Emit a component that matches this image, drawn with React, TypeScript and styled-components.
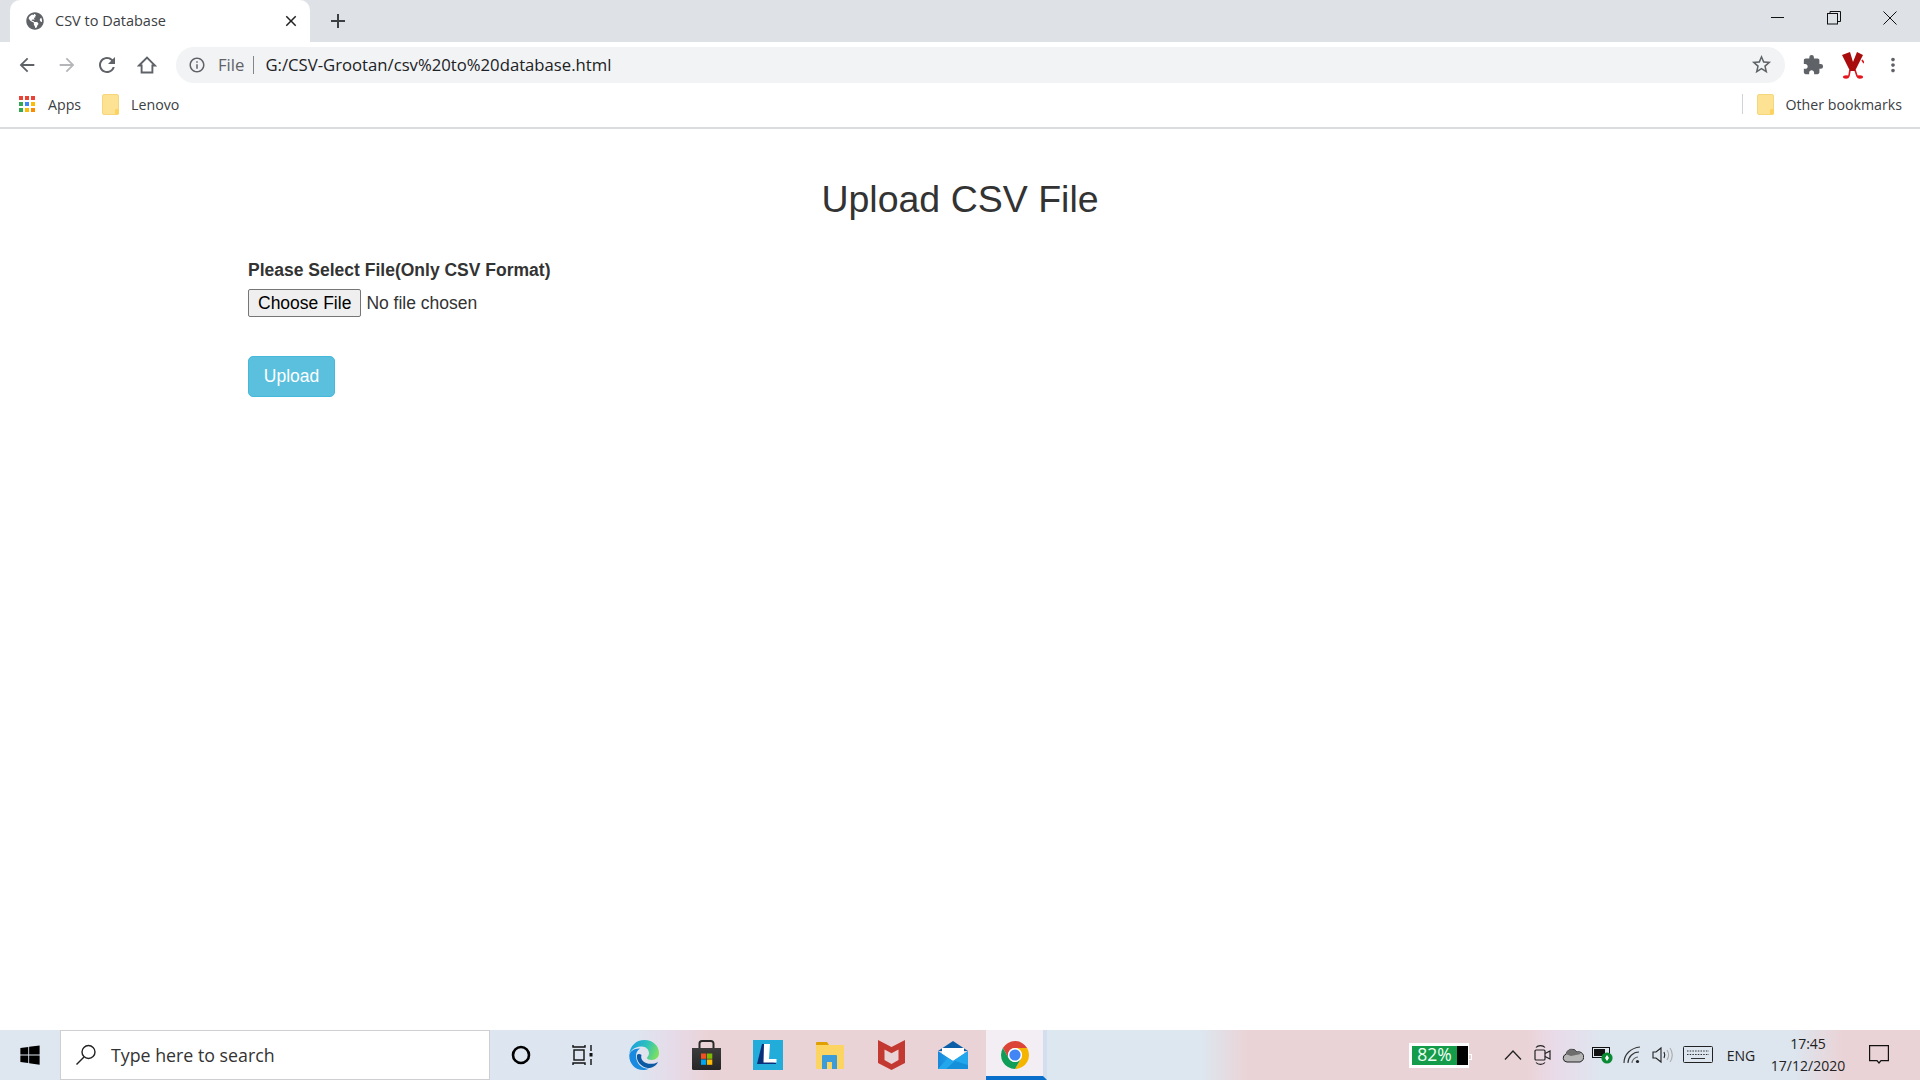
import React from "react";
import styled, { createGlobalStyle } from "styled-components";
import {
  MdArrowBack,
  MdArrowForward,
  MdRefresh,
  MdInfoOutline,
  MdStarBorder,
  MdExtension,
  MdMoreVert,
  MdClose,
  MdAdd,
} from "react-icons/md";
import { FaWindows, FaGlobeAmericas } from "react-icons/fa";

// ------------------------------------------------
// Style
// ------------------------------------------------

const uiFont = `"Open Sans", "Noto Sans", sans-serif`;

const GlobalStyle = createGlobalStyle`
  html, body {
    margin: 0;
    padding: 0;
    background: #fff;
    overflow: hidden;
  }
  * {
    box-sizing: border-box;
  }
`;

const Screen = styled.div`
  width: 1920px;
  height: 1080px;
  display: flex;
  flex-direction: column;
  font-family: ${uiFont};
`;

const TabStrip = styled.div`
  height: 42px;
  flex: none;
  background: #dee1e6;
  display: flex;
  align-items: flex-end;
  padding: 0 2px 0 10px;
`;

const Tab = styled.div`
  width: 300px;
  height: 42px;
  background: #fff;
  border-radius: 10px 10px 0 0;
  display: flex;
  align-items: center;
  padding: 0 10px 1px 16px;
  color: #5f6368;
`;

const TabTitle = styled.span`
  flex: 1;
  margin-left: 11px;
  font-size: 14.5px;
  color: #3c4043;
  white-space: nowrap;
`;

const NewTab = styled.div`
  width: 55px;
  height: 42px;
  display: flex;
  align-items: center;
  justify-content: center;
  color: #3c4043;
`;

const Spacer = styled.div`
  flex: 1;
`;

const WindowButton = styled.div`
  width: 56px;
  height: 36px;
  align-self: flex-start;
  display: flex;
  align-items: center;
  justify-content: center;
`;

const Toolbar = styled.div`
  height: 43px;
  flex: none;
  display: flex;
  align-items: center;
  padding: 2px 0 0 7px;
  background: #fff;
`;

const NavButton = styled.div<{ $muted?: boolean; $w?: number }>`
  width: ${(p) => p.$w ?? 40}px;
  height: 36px;
  flex: none;
  display: flex;
  align-items: center;
  justify-content: center;
  color: ${(p) => (p.$muted ? "#b4b6b9" : "#5f6368")};
`;

const Omnibox = styled.div`
  width: 1609px;
  height: 36px;
  margin-left: 9px;
  flex: none;
  background: #f1f3f4;
  border-radius: 18px;
  display: flex;
  align-items: center;
  padding: 0 12px;
  font-size: 16.7px;
`;

const ExtensionGroup = styled.div`
  display: flex;
  align-items: center;
  margin-left: 5px;
`;

const Scheme = styled.span`
  margin-left: 12px;
  color: #5f6368;
`;

const Divider = styled.span`
  width: 1px;
  height: 18px;
  margin: 0 11px 0 9px;
  background: #80868b;
`;

const Url = styled.span`
  flex: 1;
  color: #202124;
  white-space: nowrap;
`;

const BookmarkBar = styled.div`
  height: 44px;
  flex: none;
  display: flex;
  align-items: center;
  padding: 0 18px 4px 19px;
  background: #fff;
  border-bottom: 2px solid #dadce0;
  font-size: 14.2px;
  color: #3c4043;
`;

const BookmarkItem = styled.div<{ $gap?: number }>`
  display: flex;
  align-items: center;
  gap: ${(p) => p.$gap ?? 11}px;
  white-space: nowrap;
`;

const BookmarkLeft = styled.div`
  display: flex;
  align-items: center;
  gap: 21px;
`;

const BookmarkDivider = styled.span`
  width: 1px;
  height: 20px;
  margin-right: 14px;
  background: #d0d3d7;
`;

const Page = styled.main`
  flex: 1;
  padding: 0 248px;
  font-family: "Liberation Sans", Arial, sans-serif;
  color: #333;
`;

const Heading = styled.h2`
  margin: 50px 0 0;
  font-size: 37.5px;
  line-height: 41px;
  font-weight: 400;
  text-align: center;
`;

const FieldLabel = styled.label`
  display: block;
  margin-top: 38px;
  font-size: 17.5px;
  line-height: 25px;
  font-weight: 700;
`;

const FileInput = styled.input`
  display: block;
  margin-top: 6px;
  height: 28px;
  font-family: "Liberation Sans", Arial, sans-serif;
  font-size: 17.5px;
  color: #333;

  &::file-selector-button {
    height: 28px;
    margin-right: 5px;
    padding: 0 9px;
    font: inherit;
    color: #000;
    background: #efefef;
    border: 1px solid #767676;
    border-radius: 2px;
  }
`;

const UploadButton = styled.button`
  display: block;
  width: 87px;
  height: 41px;
  margin-top: 39px;
  padding: 0;
  font-family: inherit;
  font-size: 17.5px;
  color: #fff;
  background: #5bc0de;
  border: 1px solid #46b8da;
  border-radius: 5px;
`;

const Taskbar = styled.footer`
  height: 50px;
  flex: none;
  display: flex;
  align-items: stretch;
  background: linear-gradient(
    90deg,
    #dee7f0 0%,
    #dde6f0 33%,
    #e6dbe9 35%,
    #ead3d6 37%,
    #ead3d6 51%,
    #dde7f0 54.5%,
    #dde7f0 62.5%,
    #ead3d6 65%,
    #ead3d6 79.5%,
    #e9dbe9 81%,
    #dde6ef 83.5%,
    #dde5ee 93.5%,
    #ead3d6 96%,
    #ead3d6 100%
  );
  color: #1b1b1b;
`;

const StartButton = styled.div`
  width: 60px;
  flex: none;
  display: flex;
  align-items: center;
  justify-content: center;
  color: #000;
`;

const SearchBox = styled.div`
  width: 430px;
  flex: none;
  background: #fff;
  border: 1px solid #cfcfd2;
  display: flex;
  align-items: center;
  gap: 14px;
  padding-left: 14px;
  font-size: 17.8px;
  color: #333;
`;

const AppCell = styled.div`
  width: 61.8px;
  flex: none;
  display: flex;
  align-items: center;
  justify-content: center;
`;

const ActiveAppCell = styled(AppCell)`
  width: 61px;
  margin-left: 2px;
  padding-top: 3px;
  background: #f3eef3;
  border-bottom: 4px solid #0a6fcb;
  border-right: 4px solid #d3dfec;
`;

const Tray = styled.div`
  margin-left: auto;
  margin-right: 14px;
  display: flex;
  align-items: center;
`;

const BatteryMeter = styled.div`
  position: relative;
  width: 60px;
  height: 25px;
  margin-right: 29px;
  display: flex;
  align-items: stretch;
  border: 3px solid #fff;
  border-right-width: 1px;
  font-size: 17.5px;

  &::after {
    content: "";
    position: absolute;
    right: -4px;
    top: 8px;
    width: 2px;
    height: 4px;
    border-right: 1px solid #fff;
    border-top: 1px solid #fff;
    border-bottom: 1px solid #fff;
  }
`;

const BatteryFill = styled.div`
  flex: 1;
  background: #149c4a;
  color: #f0fff4;
  display: flex;
  align-items: center;
  justify-content: center;
  line-height: 1;
`;

const BatteryRest = styled.div`
  width: 11px;
  background: #000;
`;

const TrayIcon = styled.div<{ $w?: number }>`
  width: ${(p) => p.$w ?? 30}px;
  display: flex;
  align-items: center;
  justify-content: center;
  color: #222;
`;

const Lang = styled.div`
  width: 46px;
  text-align: center;
  font-size: 14px;
  color: #222;
`;

const Clock = styled.div`
  width: 88px;
  text-align: center;
  font-size: 14px;
  line-height: 22px;
  color: #222;
`;

const ActionCenter = styled.div`
  width: 54px;
  display: flex;
  align-items: center;
  justify-content: center;
`;

// ------------------------------------------------
// Icons
// ------------------------------------------------

const HomeGlyph = () => (
  <svg width="20" height="20" viewBox="0 0 20 20" fill="none" stroke="#5f6368" strokeWidth="1.9">
    <path d="M2 10.5L10 2.5l8 8h-2.6V17.5H4.6V10.5z" strokeLinejoin="miter" />
  </svg>
);

const AppsGrid = () => {
  const colors = ["#ea4335", "#ea4335", "#ea4335", "#34a853", "#4285f4", "#fbbc05", "#34a853", "#fbbc05", "#fb8c00"];
  return (
    <svg width="16" height="16" viewBox="0 0 16 16">
      {colors.map((c, i) => (
        <rect key={i} x={(i % 3) * 6} y={Math.floor(i / 3) * 6} width="4" height="4" fill={c} />
      ))}
    </svg>
  );
};

const BookmarkFolder = () => (
  <svg width="18" height="21" viewBox="0 0 18 21">
    <rect x="0.5" y="0.5" width="16" height="20" rx="1.5" fill="#fde293" stroke="#f5d67b" />
    <rect x="13" y="15" width="4" height="5.5" rx="1" fill="#fbd35e" />
  </svg>
);

const MinimizeGlyph = () => (
  <svg width="14" height="14" viewBox="0 0 14 14">
    <path d="M0 6.5h13" stroke="#111" />
  </svg>
);

const RestoreGlyph = () => (
  <svg width="14" height="14" viewBox="0 0 14 14" fill="none" stroke="#111">
    <rect x="0.5" y="2.5" width="10" height="10.5" />
    <path d="M3 2.5V0.5h10.5v10h-3" />
  </svg>
);

const CloseGlyph = () => (
  <svg width="14" height="14" viewBox="0 0 14 14">
    <path d="M0.5 0.5l13 13M13.5 0.5l-13 13" stroke="#111" />
  </svg>
);

const VExtension = () => (
  <svg width="22" height="28" viewBox="0 0 22 28">
    <path d="M8 19l-1 6-3 1M13 19l2 6 4 1M20 9l2 3" stroke="#e0161c" strokeWidth="1.6" fill="none" />
    <ellipse cx="4" cy="26" rx="3" ry="1.7" fill="#e8141c" />
    <ellipse cx="18" cy="26" rx="3" ry="1.7" fill="#e8141c" />
    <path d="M0 4l8-3 3 10 4-10 6 3-8 16H8z" fill="#a80c0c" />
  </svg>
);

const SearchGlyph = () => (
  <svg width="22" height="22" viewBox="0 0 22 22" fill="none" stroke="#222" strokeWidth="1.4">
    <circle cx="13.5" cy="8" r="6.5" />
    <path d="M9 13L1.5 20.5" />
  </svg>
);

const TaskView = () => (
  <svg width="22" height="22" viewBox="0 0 22 22" fill="none" stroke="#111" strokeWidth="1.4">
    <path d="M1 1v2h12V1M1 21v-2h12v2" />
    <rect x="2" y="6" width="10" height="10" />
    <path d="M19 1v6M19 15v6" />
    <rect x="17.5" y="9" width="3" height="3.5" fill="#111" stroke="none" />
  </svg>
);

const CortanaRing = () => (
  <svg width="20" height="20" viewBox="0 0 20 20" fill="none">
    <circle cx="10" cy="10" r="8" stroke="#000" strokeWidth="2.6" />
  </svg>
);

const EdgeIcon = () => (
  <svg width="30" height="30" viewBox="0 0 30 30">
    <defs>
      <linearGradient id="edgeTop" x1="0" y1="0.3" x2="1" y2="0.6">
        <stop offset="0" stopColor="#1b9de2" />
        <stop offset="0.55" stopColor="#30c3b8" />
        <stop offset="1" stopColor="#7fe05d" />
      </linearGradient>
    </defs>
    <path d="M0.3 15C0.8 6 7 0 15.5 0 24 0 30 6 30 13c0 4-3 7-7 7-3 0-5-1-5-2s2-2 2-5c0-4-4-7-8-6.5C5 7 0.8 11 0.3 15z" fill="url(#edgeTop)" />
    <path d="M0.3 15C1 11 6 8 11 8.5 7 11 6 16 8 21c2 5 7 8 12 7.5-2 1.2-4 1.5-6 1.5C6 30-0.2 23 0.3 15z" fill="#1a8ae0" />
    <path d="M8 15c-1 6 4 12 11 13 4 0 8-2 10-6-3 2-8 2.500-12 1-4-1.500-5.500-5-4.500-8-1.500-1.500-3.500-1.500-4.500 0z" fill="#0c59a4" />
  </svg>
);

const StoreIcon = () => (
  <svg width="29" height="30" viewBox="0 0 29 30">
    <defs>
      <linearGradient id="storeBody" x1="0" y1="0" x2="0" y2="1">
        <stop offset="0" stopColor="#3c3c3c" />
        <stop offset="1" stopColor="#252525" />
      </linearGradient>
    </defs>
    <path d="M7.5 8V3.500a2.500 2.500 0 0 1 2.500-2.500h9a2.500 2.500 0 0 1 2.500 2.500V8" fill="none" stroke="#2a2a2a" strokeWidth="2" />
    <path d="M0 8h29v20.500a1.500 1.500 0 0 1-1.500 1.500h-26A1.500 1.500 0 0 1 0 28.500z" fill="url(#storeBody)" />
    <rect x="9" y="13.500" width="5.300" height="5.300" fill="#f25022" />
    <rect x="15" y="13.500" width="5.300" height="5.300" fill="#7fba00" />
    <rect x="9" y="19.500" width="5.300" height="5.300" fill="#00a4ef" />
    <rect x="15" y="19.500" width="5.300" height="5.300" fill="#ffb900" />
  </svg>
);

const LenovoTile = () => (
  <svg width="30" height="30" viewBox="0 0 30 30">
    <rect width="30" height="30" fill="#22acd9" />
    <path d="M9 4h2v15l12 4v1H4z" fill="#0a2f7a" />
    <path d="M11 4h6l-1 15h7.500v3.500H10.500z" fill="#fff" />
  </svg>
);

const ExplorerIcon = () => (
  <svg width="28" height="28" viewBox="0 0 28 28">
    <path d="M0 2a1 1 0 0 1 1-1h10l2 3H0z" fill="#e0a100" />
    <rect y="4" width="28" height="24" rx="1" fill="#fcd462" />
    <path d="M6 28V15a1 1 0 0 1 1-1h13a1 1 0 0 1 1 1v13h-5v-7h-5v7z" fill="#3c9bd9" />
  </svg>
);

const McAfeeIcon = () => (
  <svg width="27" height="30" viewBox="0 0 27 30">
    <path
      fillRule="evenodd"
      d="M0 0l13.500 7L27 0v23l-13.500 7L0 23zM6.500 9.500v10.500l7 4 7-4V9.500l-7 3.800z"
      fill="#c43832"
    />
  </svg>
);

const MailIcon = () => (
  <svg width="30" height="28" viewBox="0 0 30 28">
    <defs>
      <linearGradient id="mailBody" x1="0" y1="0" x2="1" y2="0">
        <stop offset="0" stopColor="#1687dc" />
        <stop offset="1" stopColor="#37c3f4" />
      </linearGradient>
    </defs>
    <path d="M0 10L15 0l15 10z" fill="#0a5fa8" />
    <path d="M4 7h22v6l-11 7-11-7z" fill="#fff" />
    <path d="M0 10l15 10 15-10v18H0z" fill="url(#mailBody)" />
    <path d="M0 28l10-11 5 3 15-10v18z" fill="#22a7ec" />
    <path d="M30 28H8l9-8 13 4z" fill="#0f7fd1" opacity="0.6" />
  </svg>
);

const ChromeIcon = () => (
  <svg width="28" height="28" viewBox="0 0 40 40">
    <path d="M2.680 10A20 20 0 0 1 37.320 10H20A10 10 0 0 0 11.340 25z" fill="#db4437" />
    <path d="M37.320 10A20 20 0 0 1 20 40L28.660 25A10 10 0 0 0 20 10z" fill="#f4b400" />
    <path d="M20 40A20 20 0 0 1 2.680 10L11.340 25A10 10 0 0 0 28.660 25z" fill="#0f9d58" />
    <circle cx="20" cy="20" r="10" fill="#fff" />
    <circle cx="20" cy="20" r="8" fill="#4285f4" />
  </svg>
);

const ChevronGlyph = () => (
  <svg width="18" height="12" viewBox="0 0 18 12" fill="none" stroke="#222" strokeWidth="1.3">
    <path d="M1 10.500L9 2l8 8.500" />
  </svg>
);

const VideoGlyph = () => (
  <svg width="18" height="22" viewBox="0 0 18 22" fill="none" stroke="#222" strokeWidth="1.2">
    <rect x="1" y="6" width="10" height="10" rx="1" />
    <path d="M11 9.500l5-2.500v8l-5-2.500" />
    <path d="M2 3.500C4 1 9 1 11 3.500M2 18.500c2 2.500 7 2.500 9 0" />
  </svg>
);

const CloudGlyph = () => (
  <svg width="22" height="16" viewBox="0 0 22 16">
    <path d="M5 15a4 4 0 0 1-1-7.800A6 6 0 0 1 15 5a4.500 4.500 0 0 1 3 10z" fill="#b5b5b5" stroke="#222" />
    <path d="M4 7.200A6 6 0 0 1 15 5c1.500 0 3 .8 3.700 2L9 9z" fill="#6d6d6d" />
  </svg>
);

const BatteryGlyph = () => (
  <svg width="22" height="18" viewBox="0 0 22 18">
    <rect x="0.500" y="1.500" width="17" height="10" fill="none" stroke="#111" />
    <rect x="2" y="3" width="11" height="7" fill="#111" />
    <circle cx="15" cy="12" r="5.600" fill="#0a8a33" />
    <path d="M15 9l2 3-2 3-2-3z" fill="#fff" />
  </svg>
);

const WifiGlyph = () => (
  <svg width="20" height="18" viewBox="0 0 20 18" fill="none" stroke="#333" strokeWidth="1.1">
    <path d="M1 17C1 8 8 2 17 1" />
    <path d="M5 17c0-6 5-11 11-11" />
    <path d="M9 17c0-3 3-6 6-6" stroke="#666" />
    <circle cx="14.500" cy="15.500" r="1.600" fill="#222" stroke="none" />
  </svg>
);

const SpeakerGlyph = () => (
  <svg width="22" height="18" viewBox="0 0 22 18" fill="none" stroke="#222" strokeWidth="1.1">
    <path d="M1 6h3l5-4v14l-5-4H1z" />
    <path d="M12 6c1 2 1 4 0 6" />
    <path d="M15 4c2 3 2 7 0 10M18 2c3 4 3 10 0 14" stroke="#aaa" />
  </svg>
);

const KeyboardGlyph = () => (
  <svg width="30" height="18" viewBox="0 0 30 18" fill="none">
    <rect x="0.500" y="0.500" width="29" height="16" rx="1" stroke="#222" />
    <path d="M4 5h22M4 8.500h22" stroke="#333" strokeDasharray="1.500 1.200" />
    <path d="M8 12.500h14" stroke="#333" />
  </svg>
);

const ChatGlyph = () => (
  <svg width="20" height="20" viewBox="0 0 20 20" fill="none" stroke="#111" strokeWidth="1.2">
    <path d="M0.600 0.600h18.800v15H12l-2 2.400-2-2.400H0.600z" />
  </svg>
);

// ------------------------------------------------
// View
// ------------------------------------------------

const App = () => {
  return (
    <Screen>
      <GlobalStyle />

      <TabStrip>
        <Tab>
          <FaGlobeAmericas size={18} />
          <TabTitle>CSV to Database</TabTitle>
          <MdClose size={18} color="#222" />
        </Tab>
        <NewTab>
          <MdAdd size={24} />
        </NewTab>
        <Spacer />
        <WindowButton><MinimizeGlyph /></WindowButton>
        <WindowButton><RestoreGlyph /></WindowButton>
        <WindowButton><CloseGlyph /></WindowButton>
      </TabStrip>

      <Toolbar>
        <NavButton><MdArrowBack size={22} /></NavButton>
        <NavButton $muted><MdArrowForward size={22} /></NavButton>
        <NavButton><MdRefresh size={24} /></NavButton>
        <NavButton><HomeGlyph /></NavButton>
        <Omnibox>
          <MdInfoOutline size={18} color="#5f6368" />
          <Scheme>File</Scheme>
          <Divider />
          <Url>G:/CSV-Grootan/csv%20to%20database.html</Url>
          <MdStarBorder size={23} color="#5f6368" />
        </Omnibox>
        <ExtensionGroup>
          <NavButton $w={45}><MdExtension size={22} /></NavButton>
          <NavButton $w={36}><VExtension /></NavButton>
          <NavButton $w={44}><MdMoreVert size={22} /></NavButton>
        </ExtensionGroup>
      </Toolbar>

      <BookmarkBar>
        <BookmarkLeft>
          <BookmarkItem $gap={13}>
            <AppsGrid />
            <span>Apps</span>
          </BookmarkItem>
          <BookmarkItem>
            <BookmarkFolder />
            <span>Lenovo</span>
          </BookmarkItem>
        </BookmarkLeft>
        <Spacer />
        <BookmarkDivider />
        <BookmarkItem>
          <BookmarkFolder />
          <span>Other bookmarks</span>
        </BookmarkItem>
      </BookmarkBar>

      <Page>
        <Heading>Upload CSV File</Heading>
        <FieldLabel htmlFor="csv">Please Select File(Only CSV Format)</FieldLabel>
        <FileInput id="csv" type="file" accept=".csv" />
        <UploadButton type="button">Upload</UploadButton>
      </Page>

      <Taskbar>
        <StartButton><FaWindows size={22} /></StartButton>
        <SearchBox>
          <SearchGlyph />
          <span>Type here to search</span>
        </SearchBox>
        <AppCell><CortanaRing /></AppCell>
        <AppCell><TaskView /></AppCell>
        <AppCell><EdgeIcon /></AppCell>
        <AppCell><StoreIcon /></AppCell>
        <AppCell><LenovoTile /></AppCell>
        <AppCell><ExplorerIcon /></AppCell>
        <AppCell><McAfeeIcon /></AppCell>
        <AppCell><MailIcon /></AppCell>
        <ActiveAppCell><ChromeIcon /></ActiveAppCell>
        <Tray>
          <BatteryMeter>
            <BatteryFill>82%</BatteryFill>
            <BatteryRest />
          </BatteryMeter>
          <TrayIcon><ChevronGlyph /></TrayIcon>
          <TrayIcon><VideoGlyph /></TrayIcon>
          <TrayIcon><CloudGlyph /></TrayIcon>
          <TrayIcon><BatteryGlyph /></TrayIcon>
          <TrayIcon><WifiGlyph /></TrayIcon>
          <TrayIcon><SpeakerGlyph /></TrayIcon>
          <TrayIcon $w={40}><KeyboardGlyph /></TrayIcon>
          <Lang>ENG</Lang>
          <Clock>
            17:45
            <br />
            17/12/2020
          </Clock>
          <ActionCenter><ChatGlyph /></ActionCenter>
        </Tray>
      </Taskbar>
    </Screen>
  );
};

export default App;
